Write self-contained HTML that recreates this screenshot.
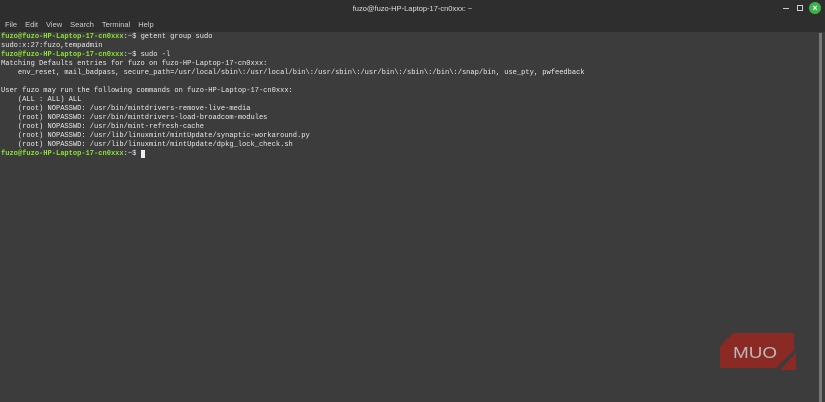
<html><head><style>
body{margin:0;width:825px;height:402px;background:#3c3c3c;overflow:hidden;position:relative;font-family:"Liberation Sans",sans-serif}
#tb{position:absolute;left:0;top:0;width:825px;height:17px;background:#2e2e2e;color:#ddd;font-size:7.5px;text-align:center;line-height:17px}
#mb{position:absolute;left:0;top:17px;width:825px;height:15px;background:#2e2e2e;color:#ccc;font-size:7.5px;line-height:15px}
#mb span{margin-left:5px;margin-right:3px}
#t{position:absolute;left:1px;top:33px;font-family:"Liberation Mono",monospace;font-size:7.05px;line-height:9px;color:#e8e8e8;white-space:pre}
.g{color:#8ae234;font-weight:bold}.b{color:#8ab4e8;font-weight:bold}
#sb{position:absolute;left:819px;top:33px;width:3px;height:369px;background:#777}
</style></head><body>
<div id="tb">fuzo@fuzo-HP-Laptop-17-cn0xxx: ~</div>
<div style="position:absolute;left:783px;top:8px;width:6px;height:1px;background:#ccc"></div>
<div style="position:absolute;left:797px;top:5px;width:4px;height:4px;border:1px solid #ccc"></div>
<div style="position:absolute;left:809px;top:2px;width:12px;height:12px;border-radius:50%;background:#3bb34a;color:#fff;font-size:9px;line-height:12px;text-align:center;font-weight:bold">×</div>
<div id="mb"><span>File</span><span>Edit</span><span>View</span><span>Search</span><span>Terminal</span><span>Help</span></div>
<div id="t"><span class="g">fuzo@fuzo-HP-Laptop-17-cn0xxx</span>:<span class="b">~</span>$ getent group sudo
sudo:x:27:fuzo,tempadmin
<span class="g">fuzo@fuzo-HP-Laptop-17-cn0xxx</span>:<span class="b">~</span>$ sudo -l
Matching Defaults entries for fuzo on fuzo-HP-Laptop-17-cn0xxx:
    env_reset, mail_badpass, secure_path=/usr/local/sbin\:/usr/local/bin\:/usr/sbin\:/usr/bin\:/sbin\:/bin\:/snap/bin, use_pty, pwfeedback

User fuzo may run the following commands on fuzo-HP-Laptop-17-cn0xxx:
    (ALL : ALL) ALL
    (root) NOPASSWD: /usr/bin/mintdrivers-remove-live-media
    (root) NOPASSWD: /usr/bin/mintdrivers-load-broadcom-modules
    (root) NOPASSWD: /usr/bin/mint-refresh-cache
    (root) NOPASSWD: /usr/lib/linuxmint/mintUpdate/synaptic-workaround.py
    (root) NOPASSWD: /usr/lib/linuxmint/mintUpdate/dpkg_lock_check.sh
<span class="g">fuzo@fuzo-HP-Laptop-17-cn0xxx</span>:<span class="b">~</span>$ <span style="background:#eee"> </span></div>
<div id="sb"></div>
<svg style="position:absolute;left:718px;top:332px" width="78" height="40"><polygon points="15,1 76,1 76,18 58,36 2,36 2,14" fill="#8b2a24"/><polygon points="78,21 78,38 62,38" fill="#8b2a24"/><text x="15" y="26" font-family="Liberation Sans" font-size="16" fill="#b8b8b8" textLength="44" lengthAdjust="spacingAndGlyphs">MUO</text></svg>
</body></html>
